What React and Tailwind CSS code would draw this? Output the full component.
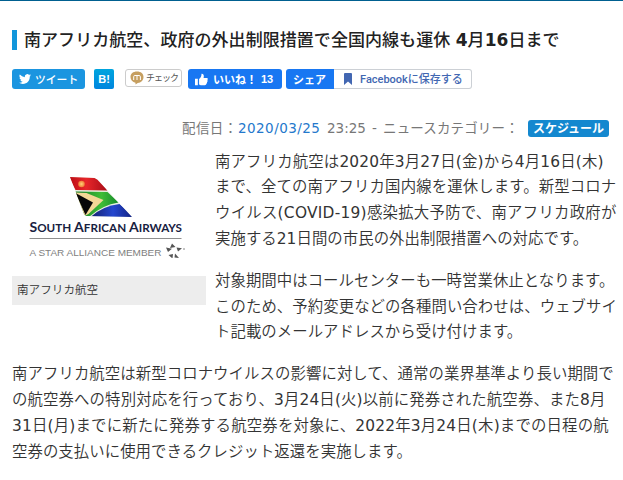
import React from "react";

const jp = "font-['DejaVu_Sans','Noto_Sans_CJK_JP',sans-serif]";
const cjk = "font-['Noto_Sans_CJK_JP',sans-serif]";

// Latin runs keep the regular weight while the kana and kanji are set lighter.
function Mixed({ text }) {
  return text.split(/([!-~]+)/).map((part, i) =>
    i % 2 ? (
      <span key={i} className="font-normal">
        {part}
      </span>
    ) : (
      part
    )
  );
}

function Lines({ items }) {
  return (
    <p className="mb-[15.5px] text-[15.4px] leading-[25.9px] text-[#333] font-[350]">
      {items.map(([text, spacing]) => (
        <span key={text} className="block whitespace-nowrap" style={{ letterSpacing: spacing }}>
          <Mixed text={text} />
        </span>
      ))}
    </p>
  );
}

function TailLogo() {
  return (
    <svg viewBox="0 0 176 86" className="block h-[86px] w-[176px]" role="img">
      <defs>
        <linearGradient id="red" x1="0" x2="1">
          <stop offset="0" stopColor="#b80c14" />
          <stop offset=".45" stopColor="#e8262a" />
          <stop offset="1" stopColor="#a80d18" />
        </linearGradient>
        <linearGradient id="green" x1="0" x2="1">
          <stop offset="0" stopColor="#117a28" />
          <stop offset=".6" stopColor="#3fbd36" />
          <stop offset="1" stopColor="#168a2c" />
        </linearGradient>
        <linearGradient id="blue" x1="0" x2="1">
          <stop offset="0" stopColor="#15206e" />
          <stop offset=".5" stopColor="#2547cf" />
          <stop offset="1" stopColor="#101d78" />
        </linearGradient>
        <radialGradient id="sun">
          <stop offset="0" stopColor="#ffd27a" />
          <stop offset="1" stopColor="#ef7a35" />
        </radialGradient>
        <clipPath id="tail">
          <path d="M45.500 5 70 6Q73 7 76 11L107.500 45 62 44Q60 44 59 41Z" />
        </clipPath>
      </defs>
      <g transform="translate(.5 0)">
        <g clipPath="url(#tail)">
          <rect x="40" width="70" height="50" fill="#e9efe0" />
          <path d="M44 4H72L83 18.500 51 18Z" fill="url(#red)" />
          <path d="M51 19.500 83 20 94 30.500Q78 33 65 44.500L60 44Z" fill="url(#green)" />
          <path d="M51 20.500 62 21 79 28 64 42 60 44Z" fill="#f3d796" />
          <path d="M51 21 68.500 30.500 61 43Z" fill="#080808" />
          <path d="M66 45Q78 34 95 32L111 46Z" fill="url(#blue)" />
        </g>
        <circle cx="57" cy="12" r="3.300" fill="url(#sun)" />
        <g className="font-['Lato','Open_Sans',sans-serif]" fill="#17213f" fontWeight="700">
          <text x="5" y="60" fontSize="13.5" textLength="152.500" lengthAdjust="spacingAndGlyphs">
            S<tspan fontSize="11.2">OUTH </tspan>A<tspan fontSize="11.2">FRICAN </tspan>A<tspan fontSize="11.2">IRWAYS</tspan>
          </text>
        </g>
        <path d="M5 66.500H157" stroke="#8e8e8e" />
        <text x="5" y="83.500" fontSize="8.800" textLength="132" lengthAdjust="spacingAndGlyphs" fill="#808080" className="font-['Liberation_Sans',sans-serif]">
          A STAR ALLIANCE MEMBER
        </text>
        <path fill="#555" d="M147.500 71.500l3.500 3.500-5.500 1zM141.500 75.500l6 1.200-4 3.300zM152 75.500l5.500 .8-4 3.200zM144 83l4.500-1-.5 4.500zM150.500 81.500l4 4.500-4.500-.5z" />
        <path d="M158.500 77h2" stroke="#888" />
      </g>
    </svg>
  );
}

export default function App() {
  return (
    <div className={`h-[480px] w-[623px] overflow-hidden bg-white ${jp}`}>
      <div className="h-px bg-[#006090]" />
      <main className="px-3 pt-[29px]">
        <h1 className="flex h-5 items-center whitespace-nowrap border-l-[5px] border-[#1296db] pl-[7px] text-[17px] font-medium leading-5 text-[#222]">
          <span className="tracking-[0.05px]">
            南アフリカ航空、政府の外出制限措置で全国内線も運休 <b className="font-bold">4</b>月<b className="font-bold">16</b>日まで
          </span>
        </h1>

        <div className={`mt-[19px] flex h-5 items-start whitespace-nowrap ${cjk}`}>
          <div className="flex h-5 w-[73px] items-center rounded-[3px] bg-[#1b95e0] pl-[7px] text-[10.8px] font-medium text-white">
            <svg viewBox="0 0 24 24" className="mr-1 h-3 w-3" fill="currentColor">
              <path d="M23.950 4.570a10 10 0 0 1-2.820.77 4.960 4.960 0 0 0 2.160-2.720 9.900 9.900 0 0 1-3.120 1.190 4.920 4.920 0 0 0-8.380 4.480A13.930 13.930 0 0 1 1.640 3.160a4.920 4.920 0 0 0 1.520 6.570 4.900 4.900 0 0 1-2.230-.61v.06a4.920 4.920 0 0 0 3.950 4.830 5 5 0 0 1-2.210.08 4.940 4.940 0 0 0 4.600 3.420A9.870 9.870 0 0 1 0 19.540a14 14 0 0 0 7.550 2.210c9.050 0 14-7.500 14-13.980 0-.21 0-.42-.02-.63a9.940 9.940 0 0 0 2.460-2.550z" />
            </svg>
            ツイート
          </div>
          <div className="ml-[9px] flex h-5 w-5 items-center justify-center rounded-[2px] bg-gradient-to-b from-[#00a5de] to-[#0085de] font-['Liberation_Sans'] text-[11px] font-bold text-white">B!</div>
          <div className="ml-[11px] flex h-[18px] w-[57px] items-center rounded-[3px] border border-[#ccc] bg-white pl-1 text-[9px] tracking-[-1px] text-[#555]">
            <svg viewBox="0 0 14 14" className="mr-[2px] h-[14px] w-[14px] shrink-0">
              <path d="M7 .5c4 0 6.500 2.200 6.500 5.500S11 11.800 7.800 11.900L5.500 13.500v-1.800C2.500 11.200.5 9 .5 6 .5 2.700 3 .5 7 .5z" fill="#c69f60" />
              <path d="M3.700 9V5.600q0-1.100 1.100-1.100h4.300q1.300 0 1.300 1.300V9M7 4.800V9" fill="none" stroke="#fff" />
            </svg>
            チェック
          </div>
          <div className="ml-[6px] flex h-5 w-[94px] items-center rounded-[3px] bg-[#1877f2] pl-[7px] text-[11px] font-bold text-white">
            <svg viewBox="0 0 16 16" className="mr-[5px] h-[13px] w-[13px] shrink-0" fill="currentColor">
              <path d="M0 7h3.500v8H0zM5 7.500C7.200 6 8 4 8 1c2.400-.5 3.500 2 2.500 5H14c2 0 2.500 2 1 2.700 1 1 .6 2.100-.4 2.500.6 1 .1 1.900-.8 2.100.2 1.100-.4 1.700-1.700 1.700H8c-1.500 0-2-.7-3-1z" />
            </svg>
            <span className="w-[48px]">いいね！</span>
            <span className="font-['Liberation_Sans'] text-[11px]">13</span>
          </div>
          <div className="ml-1 flex h-5 w-[48px] items-center rounded-l-[3px] bg-[#1877f2] pl-[7px] text-[11px] font-bold text-white">シェア</div>
          <div className="flex h-5 w-[138px] items-center rounded-r-[3px] border border-l-0 border-[#ccd0d5] bg-white pl-[10px] text-[11px] font-medium text-[#4267b2]">
            <svg viewBox="0 0 8 12" className="mr-2 h-3 w-2" fill="currentColor">
              <path d="M0 1q0-1 1-1h6q1 0 1 1v11L4 8.500 0 12z" />
            </svg>
            <span className="pt-[2px] font-['Roboto','Noto_Sans_CJK_JP',sans-serif]">Facebookに保存する</span>
          </div>
        </div>

        <div className="mt-[29px] flex h-5 items-center whitespace-nowrap pl-[170px] text-[13.5px] leading-5 text-[#777]">
          <span className="w-[56px] tracking-[0.4px]">配信日：</span>
          <span className="w-[89px] tracking-[0.45px] text-[#2478cc]">2020/03/25</span>
          <span className="w-[45px]">23:25</span>
          <span className="w-[11px]">-</span>
          <span className="w-[145px] tracking-[0.15px]">ニュースカテゴリー：</span>
          <span className="flex h-[17px] w-[81px] items-center justify-center rounded-[3px] bg-[#1488cf] text-[12px] font-bold leading-4 text-white">
            <span className="pt-px">スケジュール</span>
          </span>
        </div>

        <div className="flex pt-[11.5px]">
          <figure className="mt-[22.5px] w-[194px] shrink-0">
            <div className="ml-3">
              <TailLogo />
            </div>
            <figcaption className="mt-[18px] flex h-[29px] items-center bg-[#ededed] pl-[5px] text-[11.6px] font-[350] text-[#333]">南アフリカ航空</figcaption>
          </figure>
          <div className="ml-[9px]">
            <Lines
              items={[
                ["南アフリカ航空は2020年3月27日(金)から4月16日(木)", "0.16px"],
                ["まで、全ての南アフリカ国内線を運休します。新型コロナ", "0.13px"],
                ["ウイルス(COVID-19)感染拡大予防で、南アフリカ政府が", "0.26px"],
                ["実施する21日間の市民の外出制限措置への対応です。", "0.05px"],
              ]}
            />
            <Lines
              items={[
                ["対象期間中はコールセンターも一時営業休止となります。", "0.05px"],
                ["このため、予約変更などの各種問い合わせは、ウェブサイ", "0.07px"],
                ["ト記載のメールアドレスから受け付けます。", "0.05px"],
              ]}
            />
          </div>
        </div>
        <Lines
          items={[
            ["南アフリカ航空は新型コロナウイルスの影響に対して、通常の業界基準より長い期間で", "0.08px"],
            ["の航空券への特別対応を行っており、3月24日(火)以前に発券された航空券、また8月", "0.13px"],
            ["31日(月)までに新たに発券する航空券を対象に、2022年3月24日(木)までの日程の航", "0.18px"],
            ["空券の支払いに使用できるクレジット返還を実施します。", "0.06px"],
          ]}
        />
      </main>
    </div>
  );
}
